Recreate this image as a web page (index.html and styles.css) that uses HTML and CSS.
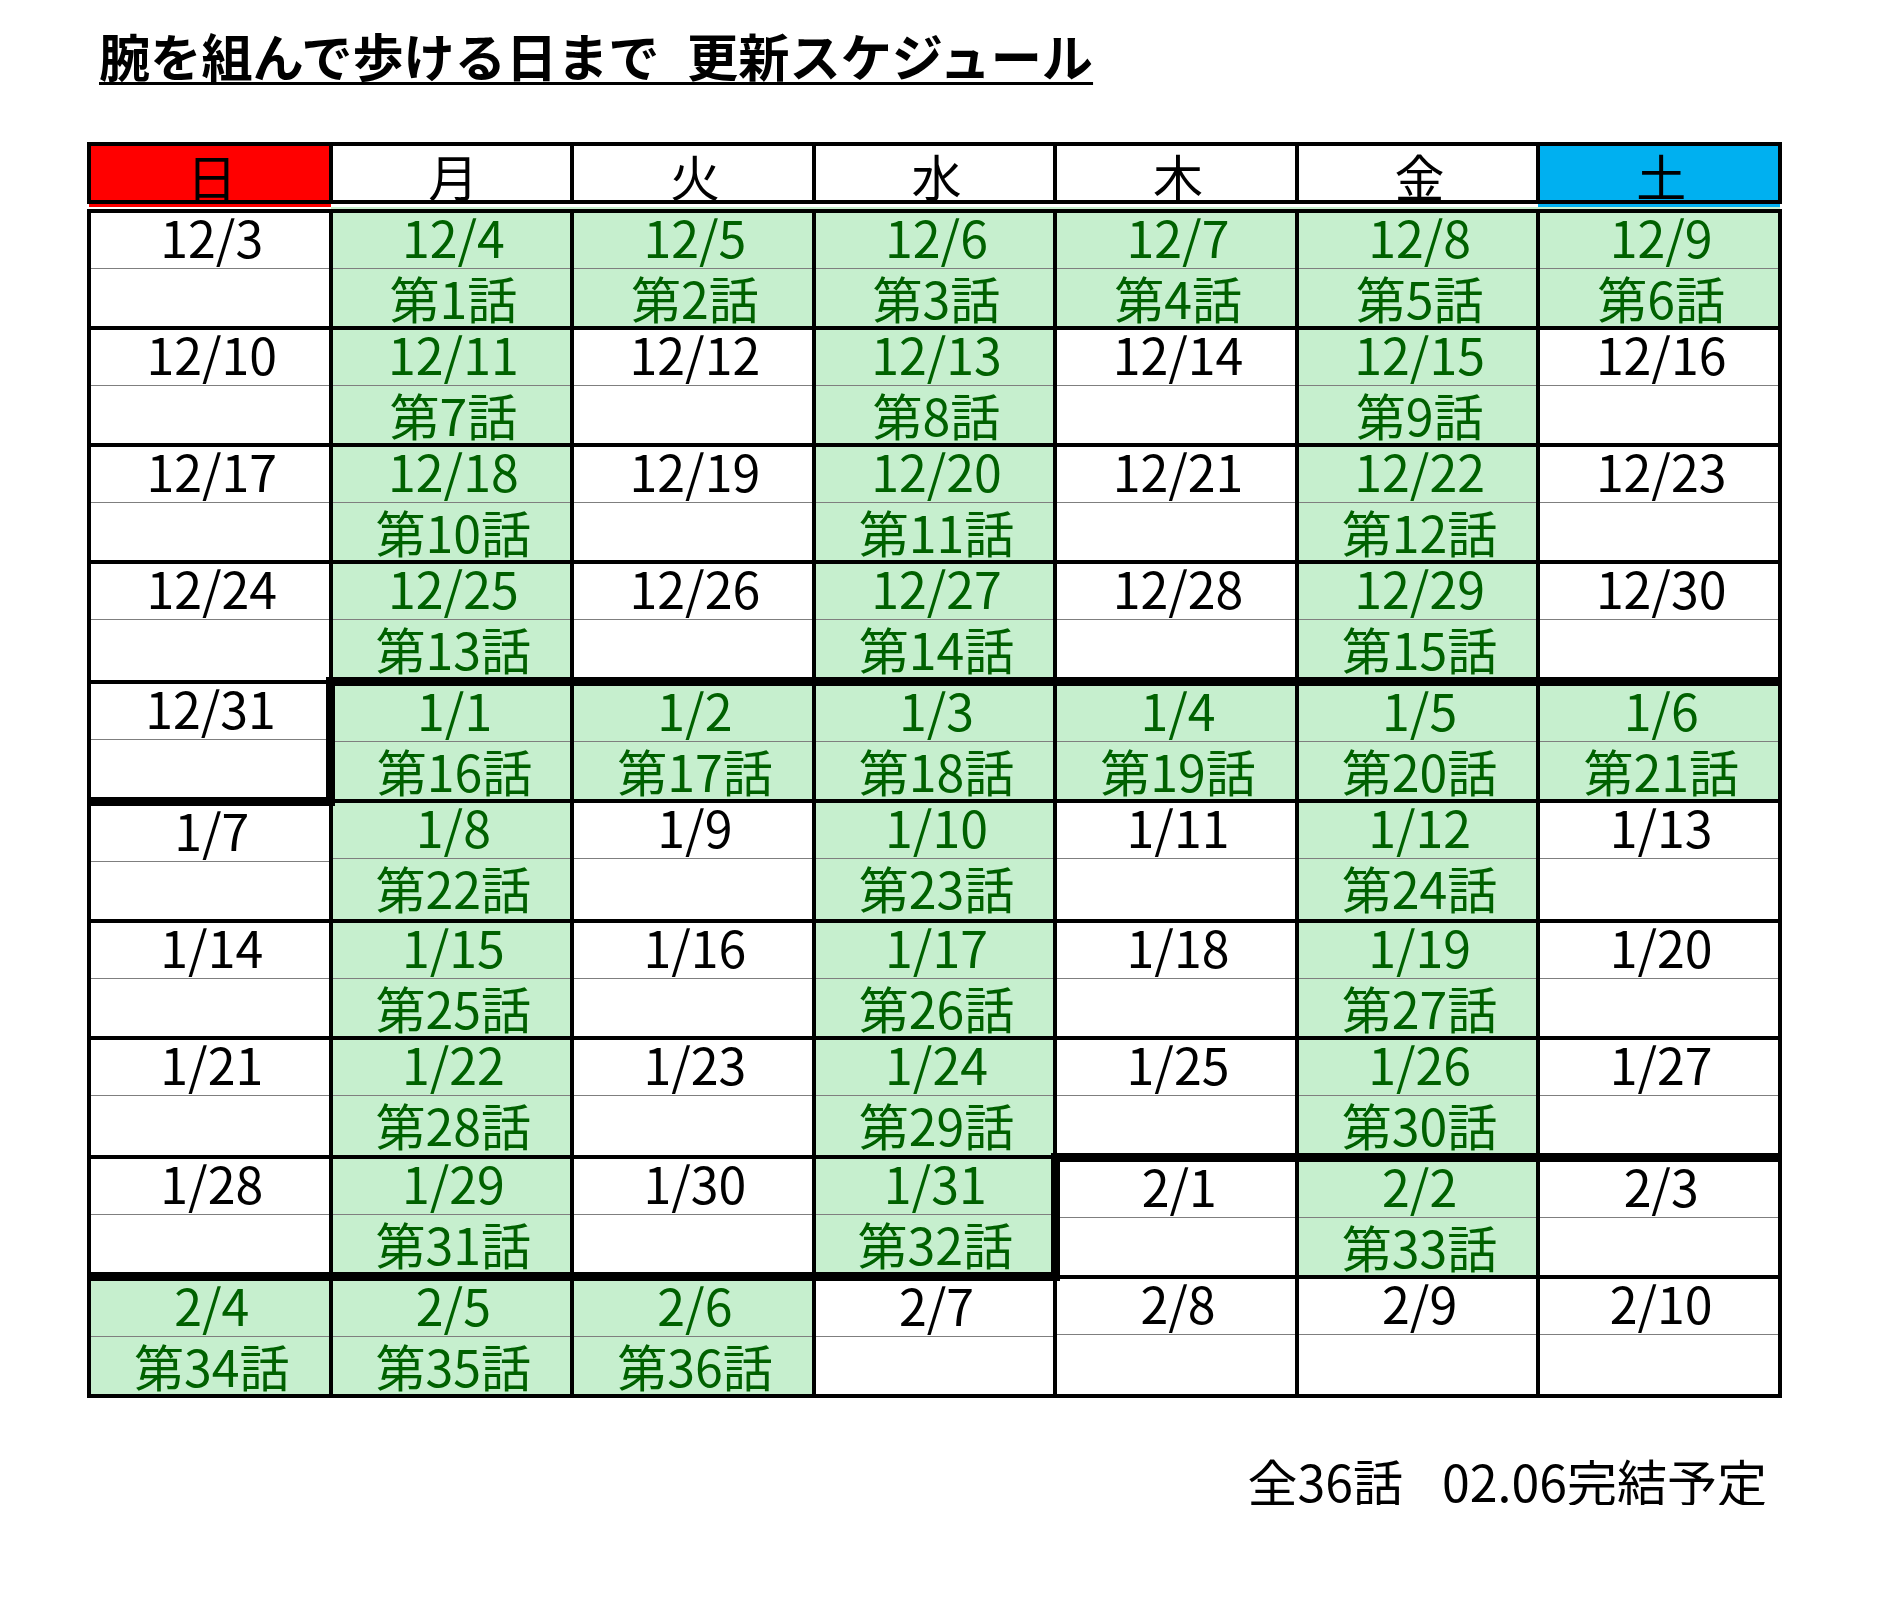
FILE: index.html
```html
<!DOCTYPE html>
<html lang="ja">
<head>
<meta charset="utf-8">
<title>更新スケジュール</title>
<link rel="stylesheet" href="styles.css">
</head>
<body>
<div class="page">
  <h1 class="title">腕を組んで歩ける日まで 更新スケジュール</h1>
  <table class="cal">
    <thead>
      <tr>
        <th class="sun">日</th><th>月</th><th>火</th><th>水</th><th>木</th><th>金</th><th class="sat">土</th>
      </tr>
    </thead>
    <tbody>
      <tr>
        <td><div class="d">12/3</div><div class="e"></div></td>
        <td class="g"><div class="d">12/4</div><div class="e">第1話</div></td>
        <td class="g"><div class="d">12/5</div><div class="e">第2話</div></td>
        <td class="g"><div class="d">12/6</div><div class="e">第3話</div></td>
        <td class="g"><div class="d">12/7</div><div class="e">第4話</div></td>
        <td class="g"><div class="d">12/8</div><div class="e">第5話</div></td>
        <td class="g"><div class="d">12/9</div><div class="e">第6話</div></td>
      </tr>
      <tr>
        <td><div class="d">12/10</div><div class="e"></div></td>
        <td class="g"><div class="d">12/11</div><div class="e">第7話</div></td>
        <td><div class="d">12/12</div><div class="e"></div></td>
        <td class="g"><div class="d">12/13</div><div class="e">第8話</div></td>
        <td><div class="d">12/14</div><div class="e"></div></td>
        <td class="g"><div class="d">12/15</div><div class="e">第9話</div></td>
        <td><div class="d">12/16</div><div class="e"></div></td>
      </tr>
      <tr>
        <td><div class="d">12/17</div><div class="e"></div></td>
        <td class="g"><div class="d">12/18</div><div class="e">第10話</div></td>
        <td><div class="d">12/19</div><div class="e"></div></td>
        <td class="g"><div class="d">12/20</div><div class="e">第11話</div></td>
        <td><div class="d">12/21</div><div class="e"></div></td>
        <td class="g"><div class="d">12/22</div><div class="e">第12話</div></td>
        <td><div class="d">12/23</div><div class="e"></div></td>
      </tr>
      <tr>
        <td><div class="d">12/24</div><div class="e"></div></td>
        <td class="g"><div class="d">12/25</div><div class="e">第13話</div></td>
        <td><div class="d">12/26</div><div class="e"></div></td>
        <td class="g"><div class="d">12/27</div><div class="e">第14話</div></td>
        <td><div class="d">12/28</div><div class="e"></div></td>
        <td class="g"><div class="d">12/29</div><div class="e">第15話</div></td>
        <td><div class="d">12/30</div><div class="e"></div></td>
      </tr>
      <tr>
        <td class="kr kb"><div class="d">12/31</div><div class="e"></div></td>
        <td class="g kt"><div class="d">1/1</div><div class="e">第16話</div></td>
        <td class="g kt"><div class="d">1/2</div><div class="e">第17話</div></td>
        <td class="g kt"><div class="d">1/3</div><div class="e">第18話</div></td>
        <td class="g kt"><div class="d">1/4</div><div class="e">第19話</div></td>
        <td class="g kt"><div class="d">1/5</div><div class="e">第20話</div></td>
        <td class="g kt"><div class="d">1/6</div><div class="e">第21話</div></td>
      </tr>
      <tr>
        <td><div class="d">1/7</div><div class="e"></div></td>
        <td class="g"><div class="d">1/8</div><div class="e">第22話</div></td>
        <td><div class="d">1/9</div><div class="e"></div></td>
        <td class="g"><div class="d">1/10</div><div class="e">第23話</div></td>
        <td><div class="d">1/11</div><div class="e"></div></td>
        <td class="g"><div class="d">1/12</div><div class="e">第24話</div></td>
        <td><div class="d">1/13</div><div class="e"></div></td>
      </tr>
      <tr>
        <td><div class="d">1/14</div><div class="e"></div></td>
        <td class="g"><div class="d">1/15</div><div class="e">第25話</div></td>
        <td><div class="d">1/16</div><div class="e"></div></td>
        <td class="g"><div class="d">1/17</div><div class="e">第26話</div></td>
        <td><div class="d">1/18</div><div class="e"></div></td>
        <td class="g"><div class="d">1/19</div><div class="e">第27話</div></td>
        <td><div class="d">1/20</div><div class="e"></div></td>
      </tr>
      <tr>
        <td><div class="d">1/21</div><div class="e"></div></td>
        <td class="g"><div class="d">1/22</div><div class="e">第28話</div></td>
        <td><div class="d">1/23</div><div class="e"></div></td>
        <td class="g"><div class="d">1/24</div><div class="e">第29話</div></td>
        <td><div class="d">1/25</div><div class="e"></div></td>
        <td class="g"><div class="d">1/26</div><div class="e">第30話</div></td>
        <td><div class="d">1/27</div><div class="e"></div></td>
      </tr>
      <tr>
        <td class="kb"><div class="d">1/28</div><div class="e"></div></td>
        <td class="g kb"><div class="d">1/29</div><div class="e">第31話</div></td>
        <td class="kb"><div class="d">1/30</div><div class="e"></div></td>
        <td class="g kb kr"><div class="d">1/31</div><div class="e">第32話</div></td>
        <td class="kt"><div class="d">2/1</div><div class="e"></div></td>
        <td class="g kt"><div class="d">2/2</div><div class="e">第33話</div></td>
        <td class="kt"><div class="d">2/3</div><div class="e"></div></td>
      </tr>
      <tr>
        <td class="g"><div class="d">2/4</div><div class="e">第34話</div></td>
        <td class="g"><div class="d">2/5</div><div class="e">第35話</div></td>
        <td class="g"><div class="d">2/6</div><div class="e">第36話</div></td>
        <td><div class="d">2/7</div><div class="e"></div></td>
        <td><div class="d">2/8</div><div class="e"></div></td>
        <td><div class="d">2/9</div><div class="e"></div></td>
        <td><div class="d">2/10</div><div class="e"></div></td>
      </tr>
    </tbody>
  </table>
  <p class="note">全36話 02.06完結予定</p>
</div>
</body>
</html>
```

FILE: styles.css
```css
html, body {
  margin: 0;
  padding: 0;
  background: #ffffff;
}

body {
  font-family: "Noto Sans CJK JP", "Noto Sans", sans-serif;
  color: #000000;
}

.page {
  width: 1900px;
  padding: 30px 0 0 87px;
  box-sizing: border-box;
}

.title {
  margin: 0 0 0 12px;
  font-size: 51.2px;
  line-height: 51px;
  font-weight: 700;
  word-spacing: 16px;
  text-decoration: underline;
  text-decoration-thickness: 3px;
  text-underline-offset: 5px;
  white-space: nowrap;
}

.cal {
  margin-top: 61px;
  width: 1695px;
  table-layout: fixed;
  border-collapse: collapse;
  border: 4px solid #000;
}

.cal th {
  height: 54px;
  padding: 0 0 0 4px;
  font-size: 50px;
  line-height: 50px;
  font-weight: 400;
  vertical-align: bottom;
  text-align: center;
  border: 4px solid #000;
  border-bottom: 13px double #000;
  background: #ffffff;
}

.cal th.sun { background: #ff0000; }
.cal th.sat { background: #00b0f0; }

.cal td {
  padding: 0;
  border: 4px solid #000;
  vertical-align: top;
  text-align: center;
  font-size: 50px;
  background: #ffffff;
}

.cal td.g {
  background: #c6efce;
  color: #006100;
}

.cal td.kt { border-top: 9px solid #000; }
.cal td.kb { border-bottom: 9px solid #000; }
.cal td.kr { border-right: 9px solid #000; }

.d {
  height: 55px;
  padding-left: 4px;
  line-height: 46px;
  border-bottom: 1px solid #7f7f7f;
  white-space: nowrap;
}

.e {
  height: 57px;
  padding-left: 4px;
  line-height: 57px;
  white-space: nowrap;
}

.note {
  width: 1680px;
  margin: 57px 0 0 0;
  text-align: right;
  font-size: 50px;
  line-height: 50px;
  word-spacing: 28px;
}
```
